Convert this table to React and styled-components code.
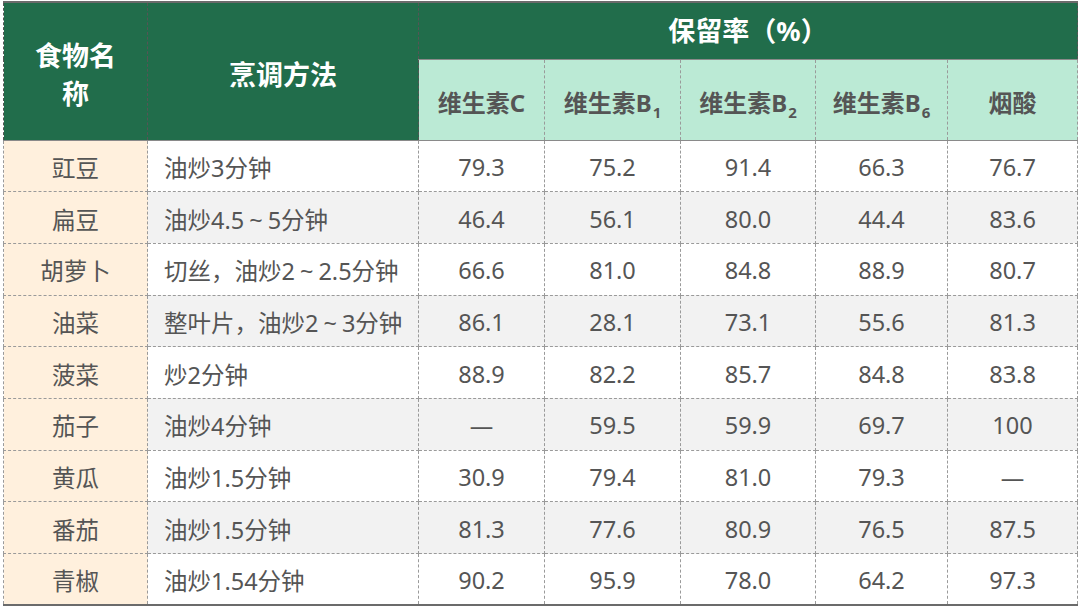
import React from "react";
import styled, { createGlobalStyle } from "styled-components";

const Global = createGlobalStyle`
  html, body { margin: 0; padding: 0; background: #ffffff; }
  body { font-family: "Noto Sans", "Noto Sans CJK SC", sans-serif; }
`;

const Wrap = styled.div`
  width: 1080px;
  height: 608px;
  padding: 1px 0 0 3px;
  box-sizing: border-box;
  overflow: hidden;
`;

const Table = styled.table`
  width: 1074px;
  border-collapse: collapse;
  table-layout: fixed;
  border-top: 2px solid #6b6b6b;
  border-bottom: 2px solid #6b6b6b;
`;

const HeadCell = styled.th`
  background: #216d4b;
  color: #ffffff;
  font-family: "Noto Sans", "Noto Sans CJK SC", sans-serif;
  font-weight: 700;
  font-size: 27px;
  line-height: 38px;
  text-align: center;
  vertical-align: middle;
  padding: ${(p) => (p.$top ? "0 8px" : "8px 20px 0")};
  border-left: 1px dashed #555;
  border-right: 1px dashed #555;
  border-bottom: 1px solid #8a8a8a;
  height: ${(p) => p.$h || "auto"};
  box-sizing: border-box;
`;

const SubCell = styled.th`
  background: #bbead5;
  color: #555555;
  font-family: "Noto Sans", "Noto Sans CJK SC", sans-serif;
  font-weight: 700;
  font-size: 24px;
  text-align: center;
  vertical-align: middle;
  padding: 4px 0 0;
  height: 81px;
  border: 1px dashed #9a9a9a;
  border-bottom: 1px solid #8a8a8a;
  box-sizing: border-box;

  sub {
    font-size: 15px;
    vertical-align: -6px;
    line-height: 0;
    margin-left: 1px;
  }
`;

const Row = styled.tr`
  background: ${(p) => (p.$alt ? "#f2f2f2" : "#ffffff")};
`;

const Cell = styled.td`
  height: 51.7px;
  padding: 2px ${(p) => (p.$left ? "16px" : "0")} 0;
  box-sizing: border-box;
  border: 1px dashed #9a9a9a;
  color: #555555;
  font-size: 23.5px;
  text-align: ${(p) => (p.$left ? "left" : "center")};
  vertical-align: middle;
  background: ${(p) => (p.$food ? "#fff0dd" : "transparent")};
  white-space: nowrap;
`;

const Tilde = styled.span`
  margin: 0 5px;
`;

const cols = [144, 271, 126, 136, 135, 132, 130];

const rows = [
  ["豇豆", "油炒3分钟", "79.3", "75.2", "91.4", "66.3", "76.7"],
  ["扁豆", "油炒4.5~5分钟", "46.4", "56.1", "80.0", "44.4", "83.6"],
  ["胡萝卜", "切丝，油炒2~2.5分钟", "66.6", "81.0", "84.8", "88.9", "80.7"],
  ["油菜", "整叶片，油炒2~3分钟", "86.1", "28.1", "73.1", "55.6", "81.3"],
  ["菠菜", "炒2分钟", "88.9", "82.2", "85.7", "84.8", "83.8"],
  ["茄子", "油炒4分钟", "—", "59.5", "59.9", "69.7", "100"],
  ["黄瓜", "油炒1.5分钟", "30.9", "79.4", "81.0", "79.3", "—"],
  ["番茄", "油炒1.5分钟", "81.3", "77.6", "80.9", "76.5", "87.5"],
  ["青椒", "油炒1.54分钟", "90.2", "95.9", "78.0", "64.2", "97.3"],
];

function Method({ text }) {
  const parts = text.split("~");
  return (
    <>
      {parts.map((p, i) => (
        <React.Fragment key={i}>
          {i > 0 && <Tilde>~</Tilde>}
          {p}
        </React.Fragment>
      ))}
    </>
  );
}

export default function App() {
  return (
    <Wrap>
      <Global />
      <Table>
        <colgroup>
          {cols.map((w, i) => (
            <col key={i} style={{ width: w }} />
          ))}
        </colgroup>
        <thead>
          <tr>
            <HeadCell rowSpan={2}>食物名称</HeadCell>
            <HeadCell rowSpan={2}>烹调方法</HeadCell>
            <HeadCell colSpan={5} $h="57px" $top>保留率（%）</HeadCell>
          </tr>
          <tr>
            <SubCell>维生素C</SubCell>
            <SubCell>维生素B<sub>1</sub></SubCell>
            <SubCell>维生素B<sub>2</sub></SubCell>
            <SubCell>维生素B<sub>6</sub></SubCell>
            <SubCell>烟酸</SubCell>
          </tr>
        </thead>
        <tbody>
          {rows.map((r, i) => (
            <Row key={i} $alt={i % 2 === 1}>
              <Cell $food>{r[0]}</Cell>
              <Cell $left>
                <Method text={r[1]} />
              </Cell>
              {r.slice(2).map((v, j) => (
                <Cell key={j}>{v}</Cell>
              ))}
            </Row>
          ))}
        </tbody>
      </Table>
    </Wrap>
  );
}
